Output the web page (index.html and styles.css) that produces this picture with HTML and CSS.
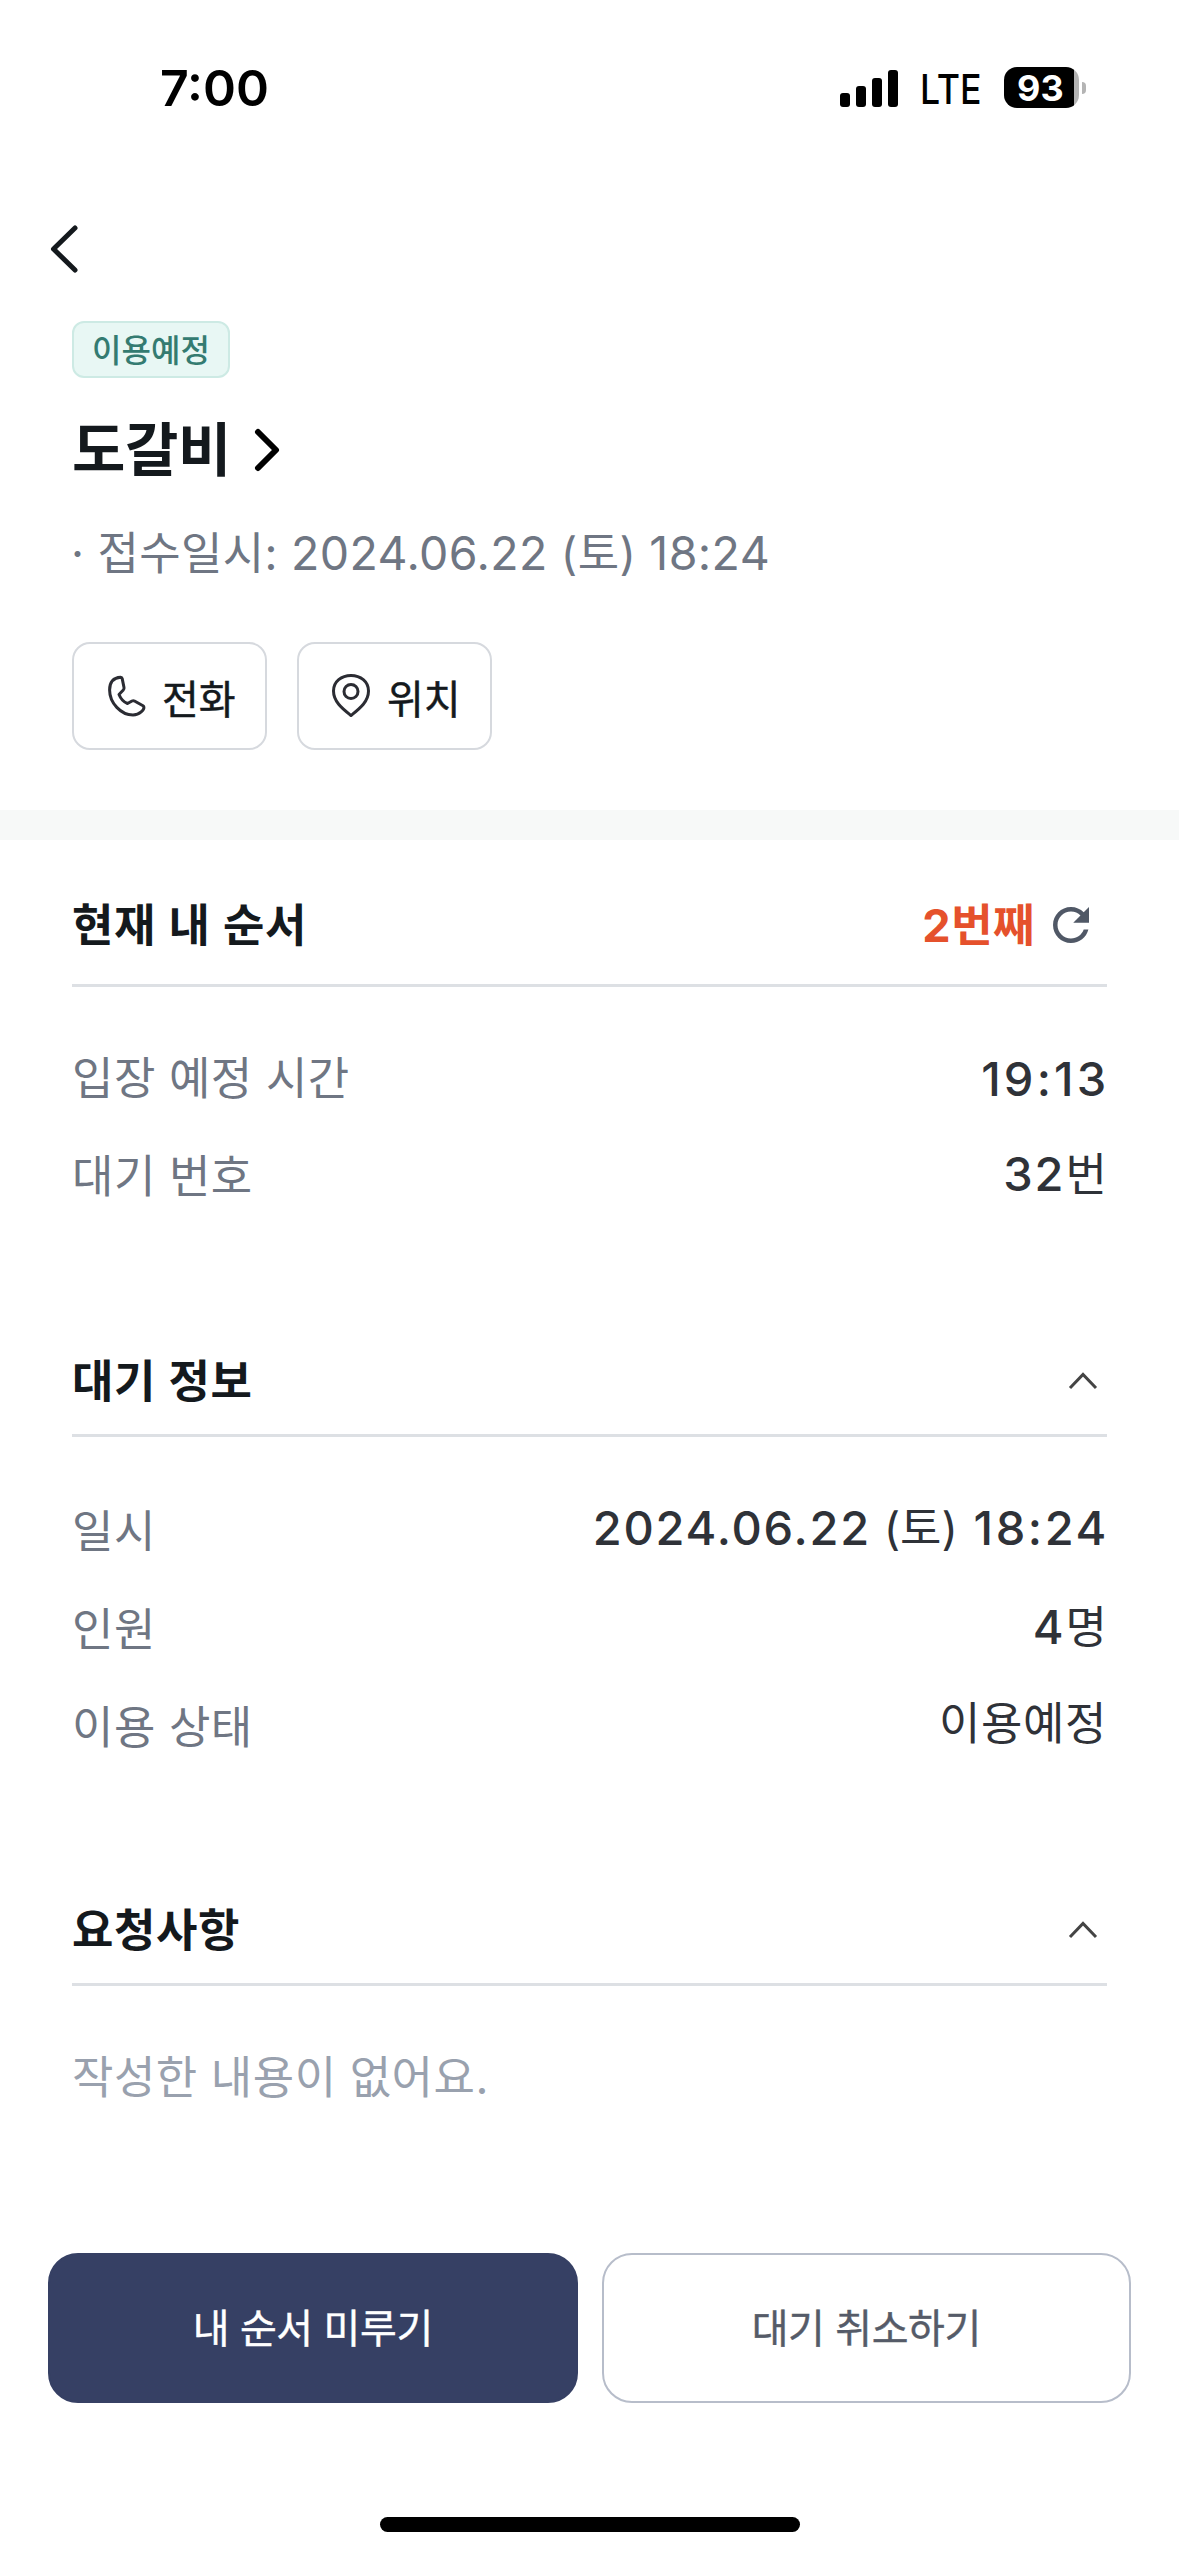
FILE: index.html
```html
<!DOCTYPE html>
<html lang="ko">
<head>
<meta charset="utf-8">
<title>대기 상세</title>
<link rel="stylesheet" href="styles.css">
</head>
<body>
<header class="status">
  <span class="clock">7:00</span>
  <div class="status-right">
    <svg class="signal" viewBox="0 0 58 38"><rect x="0" y="24" width="10" height="14" rx="3"/><rect x="16" y="17" width="10" height="21" rx="3"/><rect x="32" y="9" width="10" height="29" rx="3"/><rect x="48" y="1" width="10" height="37" rx="3"/></svg>
    <span class="network">LTE</span>
    <div class="battery"><span class="level">93</span></div>
    <span class="nub"></span>
  </div>
</header>
<nav class="nav">
  <svg class="back" viewBox="0 0 30 50"><path d="M26 4L4.500 25L26 46"/></svg>
</nav>
<section class="summary">
  <span class="badge">이용예정</span>
  <h1 class="name"><span>도갈비</span><svg class="go" viewBox="0 0 28 46"><path d="M5 5L23 23L5 41"/></svg></h1>
  <p class="received">· 접수일시: <span class="num">2024.06.22</span> (토) <span class="num">18:24</span></p>
  <div class="actions">
    <button class="chip"><svg class="phone" viewBox="0 0 42 44"><path d="M14.700 3.200Q3.600 3.800 3.600 16C3.600 29 15 41 27 41C34 41 38.200 35.500 37.900 33.200Q37.800 32.300 37 31.800L28.500 27Q27.300 26.400 26 27L21.500 29.500C17.500 28 14.800 25 13 20.500L17.300 16Q18.300 15 18 13.500L16.200 4.600Q15.900 3.200 14.700 3.200Z"/></svg><span>전화</span></button>
    <button class="chip"><svg class="pin" viewBox="0 0 44 46"><path d="M22 43.500C14 37 4.500 30 4.500 19C4.500 9.500 12.500 3.500 22 3.500S39.500 9.500 39.500 19C39.500 30 30 37 22 43.500Z"/><circle cx="22" cy="19.500" r="7"/></svg><span>위치</span></button>
  </div>
</section>
<div class="band"></div>
<main class="details">
  <section class="order">
    <div class="head"><h2>현재 내 순서</h2><div class="turn"><span>2번째</span><svg class="refresh" viewBox="0 0 24 24"><path d="M17.650 6.350C16.200 4.900 14.210 4 12 4c-4.420 0-7.990 3.580-7.990 8s3.570 8 7.990 8c3.730 0 6.840-2.550 7.730-6h-2.080c-.82 2.330-3.040 4-5.650 4-3.310 0-6-2.690-6-6s2.690-6 6-6c1.660 0 3.140.69 4.220 1.780L13 11h7V4l-2.350 2.350z"/></svg></div></div>
    <dl class="rows">
      <div class="row"><dt>입장 예정 시간</dt><dd class="entry"><span class="num time">19:13</span></dd></div>
      <div class="row"><dt>대기 번호</dt><dd class="ticket"><span class="num">32</span>번</dd></div>
    </dl>
  </section>
  <section class="info">
    <div class="head"><h2>대기 정보</h2><svg class="fold" viewBox="0 0 32 20"><path d="M3 17L16 3.500L29 17"/></svg></div>
    <dl class="rows">
      <div class="row"><dt>일시</dt><dd class="datetime"><span class="num">2024.06.22</span> (토) <span class="num time">18:24</span></dd></div>
      <div class="row"><dt>인원</dt><dd class="party"><span class="num">4</span>명</dd></div>
      <div class="row"><dt>이용 상태</dt><dd class="state">이용예정</dd></div>
    </dl>
  </section>
  <section class="request">
    <div class="head"><h2>요청사항</h2><svg class="fold" viewBox="0 0 32 20"><path d="M3 17L16 3.500L29 17"/></svg></div>
    <p class="empty">작성한 내용이 없어요.</p>
  </section>
</main>
<footer class="footer">
  <button class="cta primary">내 순서 미루기</button>
  <button class="cta">대기 취소하기</button>
</footer>
<div class="home"></div>
</body>
</html>
```
FILE: styles.css
```css
* { box-sizing: border-box; margin: 0; padding: 0; }
body {
  display: flex;
  flex-direction: column;
  width: 1179px;
  height: 2556px;
  overflow: hidden;
  background: #fff;
  color: #14191d;
  font-family: Inter, "Noto Sans CJK KR", sans-serif;
  font-size: 45px;
}
svg { display: block; fill: none; flex: none; }
button { background: none; font: inherit; color: inherit; }

/* Status bar */
.status { display: flex; justify-content: space-between; height: 176px; padding: 67px 93px 0 160px; color: #000; }
.clock { font-size: 50px; font-weight: 600; line-height: 42px; }
.status-right { display: flex; height: 41px; align-items: center; }
.signal { width: 58px; height: 38px; fill: #000; margin-right: 22px; }
.network { width: 84px; font-size: 41px; line-height: 41px; padding-top: 4px; font-weight: 500; transform: scaleX(.87); transform-origin: left; }
.battery { width: 75px; height: 41px; border-radius: 13px; background: linear-gradient(90deg, #000 70px, #b4b4b4 70px); color: #fff; padding-left: 13px; }
.level { display: block; font-size: 36px; font-weight: 700; line-height: 43px; }
.nub { width: 4px; height: 12px; margin-left: 3px; border-radius: 0 5px 5px 0; background: #b4b4b4; }

.nav { height: 145px; padding: 48px 0 0 49px; }
.back { width: 30px; height: 50px; stroke: #14191d; stroke-width: 5; stroke-linecap: round; stroke-linejoin: round; }

/* Restaurant summary */
.summary { height: 489px; padding: 0 72px; }
.badge { display: flex; justify-content: center; width: 158px; height: 57px; border: 2px solid #cdeae4; border-radius: 12px; background: #e8f7f4; color: #347b71; font-size: 32px; font-weight: 500; line-height: 55px; }
.name { display: flex; align-items: center; height: 70px; margin-top: 37px; font-size: 58px; line-height: 70px; font-weight: 700; letter-spacing: -.4px; }
.go { width: 28px; height: 46px; margin-left: 22px; stroke: #000; stroke-width: 6; stroke-linecap: round; stroke-linejoin: round; }
.received { height: 72px; margin: 33px 0 0 -1px; line-height: 70px; color: #6f7683; letter-spacing: .4px; white-space: nowrap; }
.received .num { font-size: 46.5px; font-weight: 400; letter-spacing: .4px; }
.num { font-size: 47px; font-weight: 500; letter-spacing: 2px; }
.actions { display: flex; gap: 30px; margin-top: 52px; }
.chip { display: flex; align-items: center; width: 195px; height: 108px; padding-left: 32px; border: 2px solid #d6d9de; border-radius: 18px; font-size: 40px; line-height: 96px; -webkit-text-stroke: .5px; }
.chip span { padding-top: 8px; }
.phone { width: 42px; height: 44px; stroke: #2b2c33; stroke-width: 3; stroke-linejoin: round; margin-right: 14px; }
.pin { width: 44px; height: 46px; stroke: #2b2c33; stroke-width: 3; stroke-linejoin: round; margin: -2px 14px 0 -2px; }

.band { height: 30px; background: #f7f9f8; }

/* Detail sections */
.details { padding: 0 72px; height: 1413px; }
.order { height: 490px; }
.info { height: 548px; }
.head { display: flex; justify-content: space-between; align-items: center; height: 108px; border-bottom: 3px solid #dde0e4; }
.order .head { height: 147px; padding-top: 27px; }
.info .head { height: 107px; padding-bottom: 1px; }
h2 { font-size: 45px; font-weight: 700; line-height: 70px; letter-spacing: .6px; word-spacing: 1.2px; }
.turn { display: flex; align-items: center; color: #e5512c; font-weight: 700; line-height: 70px; letter-spacing: .5px; }
.refresh { width: 54px; height: 54px; fill: #505866; margin: 0 9px 2px 9px; }
.fold { width: 32px; height: 20px; margin: 0 8px 2px 0; stroke: #444; stroke-width: 3; }
.rows { padding-top: 43px; }
.info .rows { padding-top: 46px; }
.row { display: flex; justify-content: space-between; height: 98px; line-height: 98px; white-space: nowrap; }
dt { color: #6f7683; letter-spacing: .5px; }
dd { color: #2f3238; }
.entry { line-height: 97px; }
.entry .time { letter-spacing: 3.2px; margin-right: -2.5px; }
.ticket { line-height: 91px; }
.datetime { line-height: 90px; }
.datetime .num { letter-spacing: 1.8px; }
.datetime .time { letter-spacing: 2.6px; margin: 0 -2px 0 3px; }
.party { line-height: 92px; }
.state { line-height: 89px; letter-spacing: .6px; }
.empty { padding-top: 57px; line-height: 70px; color: #99a1ae; letter-spacing: .5px; }

/* Bottom actions */
.footer { display: flex; gap: 24px; padding: 0 48px; height: 150px; }
.cta { flex: 1; border: 2px solid #b7bdca; border-radius: 30px; font-size: 40px; line-height: 147px; letter-spacing: -.4px; color: #555b68; -webkit-text-stroke: .4px; }
.primary { background: #364064; border-color: #364064; color: #fff; }
.home { width: 420px; height: 15px; margin: 114px auto 0; border-radius: 8px; background: #000; }
```
